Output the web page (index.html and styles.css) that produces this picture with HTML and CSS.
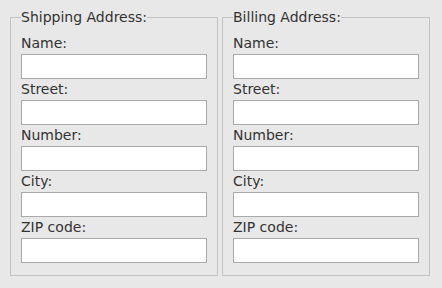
FILE: index.html
```html
<!DOCTYPE html>
<html lang="en">
<head>
    <meta charset="UTF-8">
    <meta name="viewport" content="width=device-width, initial-scale=1.0">
    <title>Addresses</title>
    <link rel="stylesheet" href="styles.css">
</head>
<body>
    <div class="addresses">
        <fieldset class="address">
            <legend>Shipping Address:</legend>
            <label>Name:</label>
            <input type="text">
            <label>Street:</label>
            <input type="text">
            <label>Number:</label>
            <input type="text">
            <label>City:</label>
            <input type="text">
            <label>ZIP code:</label>
            <input type="text">
        </fieldset>
        <fieldset class="address">
            <legend>Billing Address:</legend>
            <label>Name:</label>
            <input type="text">
            <label>Street:</label>
            <input type="text">
            <label>Number:</label>
            <input type="text">
            <label>City:</label>
            <input type="text">
            <label>ZIP code:</label>
            <input type="text">
        </fieldset>
    </div>
</body>
</html>
```
FILE: styles.css
```css
body{
    margin: 8px;
    background-color: #e8e8e8;
    font-family: "DejaVu Sans", Verdana, sans-serif;
    font-size: 14px;
    color: #333;
}
.addresses{
    display: flex;
}
.address{
    width: 208px;
    box-sizing: border-box;
    margin: 0 2px;
    padding: 7px 10px 12px 10px;
    border: 1px solid #c2c2c2;
}
.address legend{
    padding: 0;
    line-height: 18px;
}
.address label{
    display: block;
    line-height: 21px;
}
.address input{
    display: block;
    box-sizing: border-box;
    width: 186px;
    height: 25px;
    margin: 0;
    border: 1px solid #a9a9a9;
    background: #fff;
}
```
